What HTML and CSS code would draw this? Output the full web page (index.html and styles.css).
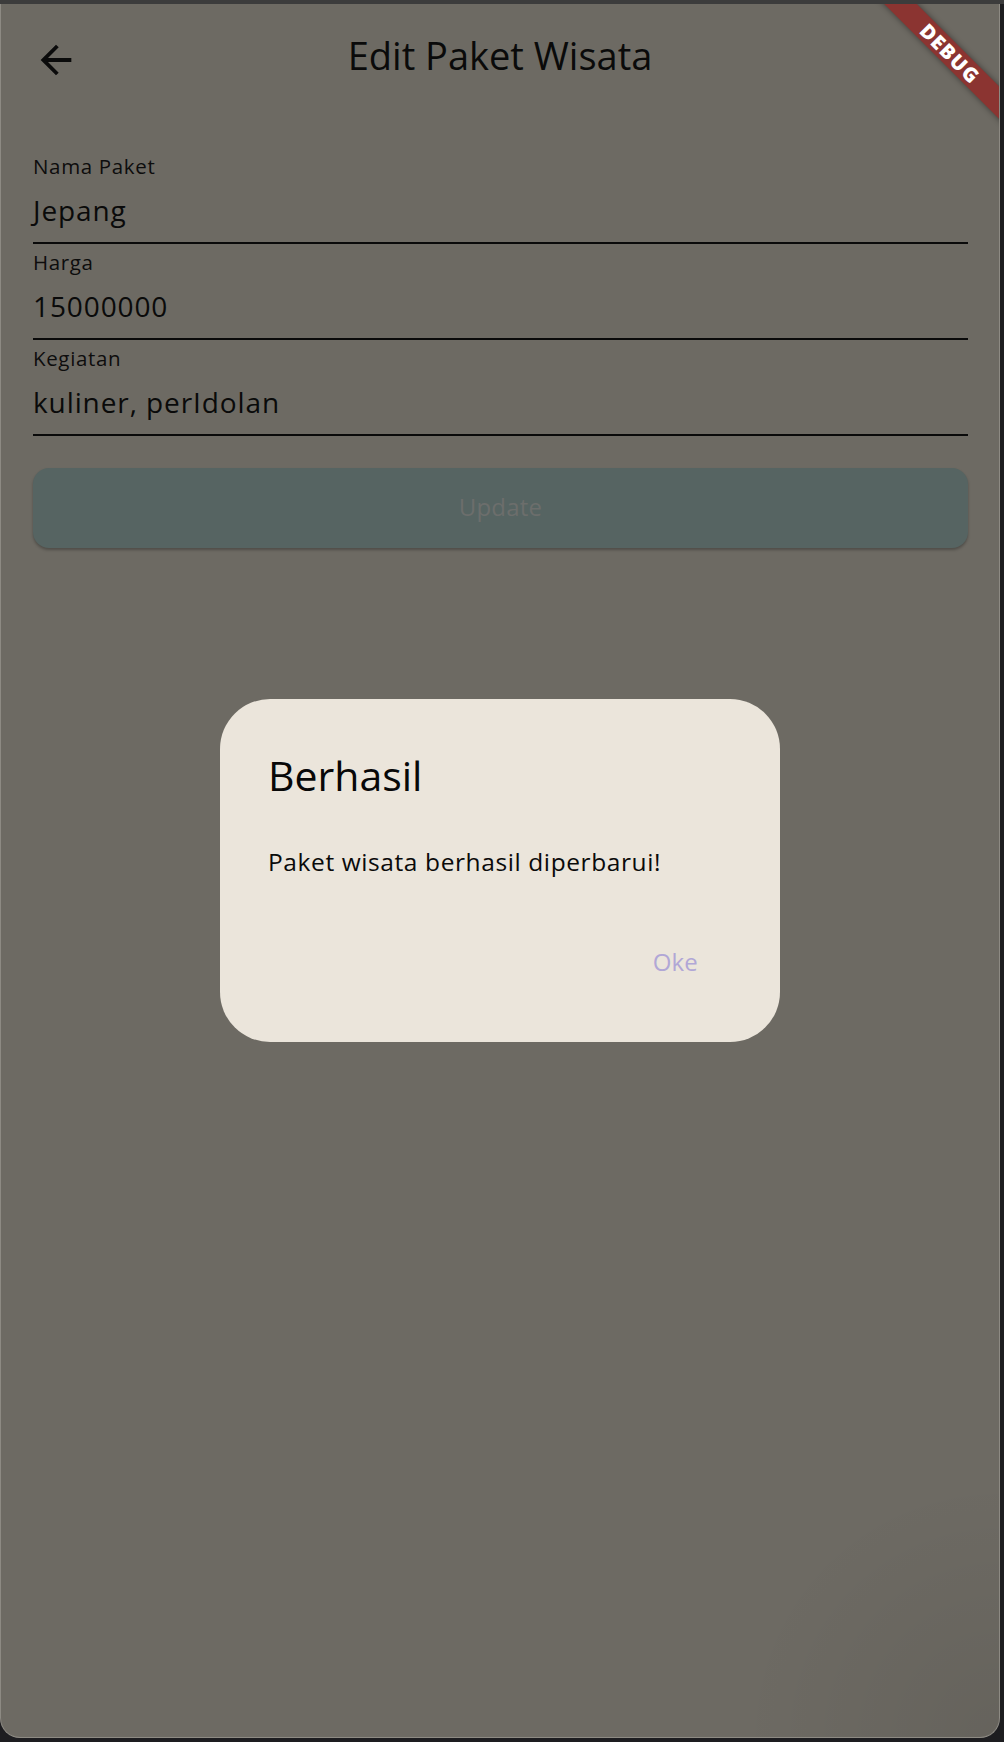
FILE: index.html
```html
<!DOCTYPE html>
<html lang="id">
<head>
<meta charset="utf-8">
<title>Edit Paket Wisata</title>
<link rel="stylesheet" href="styles.css">
</head>
<body>
<div class="topstrip"></div>
<div class="window">
  <header class="appbar">
    <div class="appbar-lead">
      <svg class="back" viewBox="0 0 24 24" width="46" height="46" aria-hidden="true">
        <path d="M20 11H7.83l5.59-5.59L12 4l-8 8 8 8 1.41-1.41L7.83 13H20v-2z" fill="#0b0b0b"/>
      </svg>
    </div>
    <h1 class="title">Edit Paket Wisata</h1>
    <div class="appbar-trail"></div>
  </header>

  <main class="form">
    <div class="field">
      <div class="label">Nama Paket</div>
      <div class="value">Jepang</div>
      <div class="line"></div>
    </div>
    <div class="field">
      <div class="label">Harga</div>
      <div class="value">15000000</div>
      <div class="line"></div>
    </div>
    <div class="field">
      <div class="label">Kegiatan</div>
      <div class="value">kuliner, perIdolan</div>
      <div class="line"></div>
    </div>
    <div class="button">Update</div>
  </main>

  <div class="overlay">
    <div class="dialog">
      <div class="dialog-title">Berhasil</div>
      <div class="dialog-body">Paket wisata berhasil diperbarui!</div>
      <div class="dialog-actions"><span class="ok">Oke</span></div>
    </div>
  </div>

  <div class="banner">DEBUG</div>
</div>
</body>
</html>
```

FILE: styles.css
```css
html, body {
  margin: 0;
  padding: 0;
}
body {
  width: 1004px;
  height: 1742px;
  background: #1d1d20;
  font-family: "Open Sans", "Noto Sans", sans-serif;
  color: #0d0d0d;
  overflow: hidden;
}
.topstrip {
  height: 4px;
  background: #3c3c3c;
}
.window {
  position: relative;
  box-sizing: border-box;
  width: 1000px;
  height: 1734px;
  background-color: #6d6a63;
  background-image: radial-gradient(circle at 100% 100%, rgba(0,0,0,0.07), rgba(0,0,0,0) 260px);
  border: 1px solid #8d8a83;
  border-top: none;
  border-radius: 0 0 20px 20px;
  overflow: hidden;
}
.appbar {
  height: 111px;
  display: grid;
  grid-template-columns: 1fr auto 1fr;
  align-items: center;
}
.appbar-lead {
  display: flex;
  align-items: center;
  padding-left: 32px;
}
.back {
  display: block;
}
.title {
  margin: 0;
  padding-bottom: 9px;
  font-weight: 400;
  font-size: 38px;
  line-height: 52px;
  color: #0a0a0a;
  white-space: nowrap;
}
.form {
  padding: 37px 31px 0 32px;
  display: flex;
  flex-direction: column;
}
.field {
  display: flex;
  flex-direction: column;
  padding-bottom: 4px;
}
.label {
  font-size: 20.5px;
  line-height: 28px;
  letter-spacing: 0.65px;
  color: #0d0d0d;
}
.value {
  margin-top: 10px;
  font-size: 28px;
  line-height: 40px;
  letter-spacing: 0.9px;
  color: #0a0a0a;
}
.line {
  margin-top: 12px;
  height: 2px;
  background: #0a0a0a;
}
.button {
  margin-top: 28px;
  height: 80px;
  border-radius: 16px;
  background: #566462;
  box-shadow: 0 2px 3px rgba(0,0,0,0.28);
  display: flex;
  align-items: center;
  justify-content: center;
  padding-bottom: 4px;
  box-sizing: border-box;
  font-size: 24px;
  letter-spacing: 0.2px;
  color: #6c6e6c;
}
.overlay {
  position: absolute;
  inset: 0;
  display: flex;
  align-items: center;
  justify-content: center;
}
.dialog {
  box-sizing: border-box;
  width: 560px;
  height: 343px;
  background: #ebe5db;
  border-radius: 50px;
  padding: 50px 82px 0 48px;
  display: flex;
  flex-direction: column;
}
.dialog-title {
  font-size: 41px;
  line-height: 52px;
  color: #080808;
}
.dialog-body {
  margin-top: 44px;
  font-size: 24.5px;
  line-height: 34px;
  letter-spacing: 0.6px;
  color: #0a0a0a;
}
.dialog-actions {
  margin-top: 66px;
  display: flex;
  justify-content: flex-end;
}
.ok {
  font-size: 24px;
  line-height: 34px;
  letter-spacing: 0.2px;
  color: #b1a7d6;
}
.banner {
  position: absolute;
  left: 799px;
  top: 38px;
  width: 300px;
  height: 23px;
  transform: rotate(45deg);
  background: #8b3431;
  box-shadow: 0 0 6px rgba(0,0,0,0.45);
  color: #ffffff;
  font-family: "Open Sans", "DejaVu Sans", sans-serif;
  font-weight: 800;
  font-size: 20px;
  line-height: 23px;
  letter-spacing: 1.2px;
  text-align: center;
}
```
